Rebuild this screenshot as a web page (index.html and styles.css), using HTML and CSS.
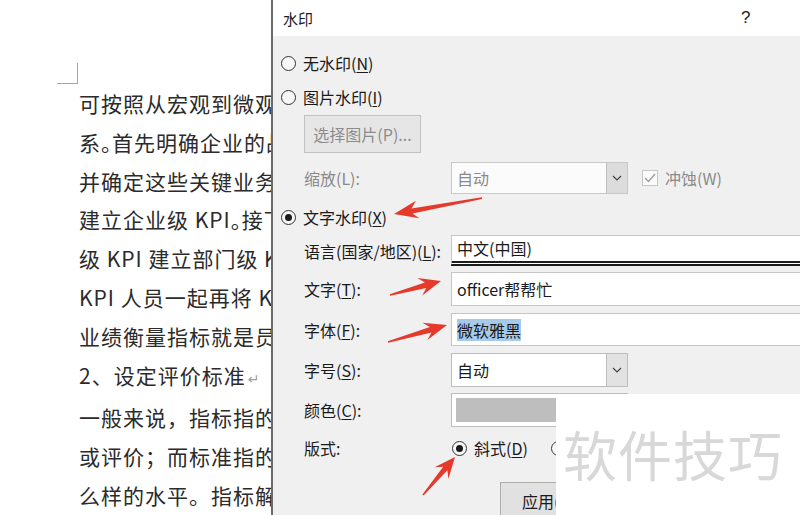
FILE: index.html
```html
<!DOCTYPE html>
<html lang="zh-CN">
<head>
<meta charset="utf-8">
<title>水印</title>
<link rel="stylesheet" href="styles.css">
</head>
<body>
<div class="page">
  <div class="doc">
    <div class="corner"></div>
    <div class="text">
      <div class="line">可按照从宏观到微观的顺序，逐层分解</div>
      <div class="line">系<span class="p">。</span>首先明确企业的战略目标</div>
      <div class="line">并确定这些关键业务领域的</div>
      <div class="line">建立企业级 KPI<span class="p">。</span>接下来</div>
      <div class="line">级 KPI 建立部门级 KPI</div>
      <div class="line">KPI 人员一起再将 KPI 进一步</div>
      <div class="line">业绩衡量指标就是员工考核</div>
      <div class="line">2、设定评价标准<span class="ret">↵</span></div>
      <div class="line">一般来说，指标指的是</div>
      <div class="line">或评价；而标准指的是</div>
      <div class="line">么样的水平。指标解决的</div>
    </div>
  </div>

  <div class="dialog">
    <div class="titlebar">
      <span class="title">水印</span>
      <span class="help">?</span>
      <span class="close">✕</span>
    </div>
    <div class="body">
      <div class="radio-row"><span class="radio"></span><span>无水印(<u>N</u>)</span></div>
      <div class="radio-row"><span class="radio"></span><span>图片水印(<u>I</u>)</span></div>
      <div class="indent"><div class="btn disabled">选择图片(P)...</div></div>

      <div class="form-row r-scale disabled">
        <span class="lbl">缩放(L):</span>
        <div class="combo">
          <span class="val">自动</span>
          <span class="drop"><svg width="10" height="6" viewBox="0 0 10 6"><polyline points="1,1 5,5 9,1" fill="none" stroke="#444" stroke-width="1.2"/></svg></span>
        </div>
        <span class="check"><svg width="12" height="10" viewBox="0 0 12 10"><polyline points="1,5 4.5,8.5 11,1" fill="none" stroke="#9a9a9a" stroke-width="1.2"/></svg></span>
        <span class="check-lbl">冲蚀(W)</span>
      </div>

      <div class="radio-row r-text"><span class="radio on"></span><span>文字水印(<u>X</u>)</span></div>

      <div class="form-row r-lang">
        <span class="lbl">语言(国家/地区)(<u>L</u>):</span>
        <div class="field lang">中文(中国)</div>
      </div>
      <div class="form-row r-word">
        <span class="lbl">文字(<u>T</u>):</span>
        <div class="field">officer帮帮忙</div>
      </div>
      <div class="form-row r-font">
        <span class="lbl">字体(<u>F</u>):</span>
        <div class="field"><span class="sel">微软雅黑</span></div>
      </div>
      <div class="form-row r-size">
        <span class="lbl">字号(<u>S</u>):</span>
        <div class="combo">
          <span class="val">自动</span>
          <span class="drop"><svg width="10" height="6" viewBox="0 0 10 6"><polyline points="1,1 5,5 9,1" fill="none" stroke="#444" stroke-width="1.2"/></svg></span>
        </div>
      </div>
      <div class="form-row r-color">
        <span class="lbl">颜色(<u>C</u>):</span>
        <div class="combo color"><span class="swatch"></span></div>
      </div>
      <div class="form-row r-layout">
        <span class="lbl">版式:</span>
        <div class="opts">
          <span class="radio on"></span><span>斜式(<u>D</u>)</span>
          <span class="radio second"></span><span>水平(<u>H</u>)</span>
        </div>
      </div>
      <div class="apply-row"><div class="btn apply">应用(A)</div></div>
    </div>
  </div>

  <div class="logo">软件技巧</div>

  <svg class="arrows" width="800" height="515" viewBox="0 0 800 515">
    <polygon points="394,214 415.9,200.7 411.5,208.5 481.9,197.3 482.1,198.9 412.5,213.5 419.3,218.3" fill="#e5392c"/>
    <polygon points="441,281 417.4,278.1 424.9,282.5 389.8,294.3 390.2,295.7 426.3,287.9 422.2,295.5" fill="#e5392c"/>
    <polygon points="447,325 422.4,322.8 429.9,327 387.8,341.3 388.2,342.7 431.5,332.4 427.4,340" fill="#e5392c"/>
    <polygon points="455,457 434.6,467.3 443.2,466.7 422.4,494.5 423.6,495.5 447.4,470.3 448.4,478.9" fill="#e5392c"/>
  </svg>
</div>
</body>
</html>
```

FILE: styles.css
```css
* {
  box-sizing: border-box;
  margin: 0;
  padding: 0;
}

html, body {
  width: 800px;
  height: 515px;
  overflow: hidden;
  background: #fff;
}

body {
  font-family: "Noto Sans CJK SC", "Noto Sans", sans-serif;
}

.page {
  position: relative;
  display: flex;
  width: 800px;
  height: 515px;
  overflow: hidden;
}

/* ---------- document ---------- */
.doc {
  width: 271px;
  flex: none;
  background: #fff;
  overflow: hidden;
}

.corner {
  width: 21px;
  height: 21px;
  margin: 63px 0 0 57px;
  border-right: 1px solid #a6a6a6;
  border-bottom: 1px solid #a6a6a6;
}

.text {
  padding-left: 79px;
  font-size: 21px;
  line-height: 38.8px;
  letter-spacing: 1px;
  color: #2b2b2b;
  white-space: nowrap;
}

.text .p {
  letter-spacing: -10px;
}

.text .ret {
  font-family: "DejaVu Sans", sans-serif;
  font-size: 14px;
  color: #9a9a9a;
  margin-left: 2px;
}

/* ---------- dialog ---------- */
.dialog {
  flex: 1;
  min-width: 0;
  border-left: 2px solid #6a6a6a;
  background: #f0f0f0;
  display: flex;
  flex-direction: column;
  overflow: hidden;
  color: #1a1a1a;
}

.titlebar {
  height: 36px;
  flex: none;
  background: #fff;
  display: flex;
  align-items: center;
  padding-left: 10px;
  font-size: 15px;
}

.help {
  margin-left: auto;
  font-family: "Liberation Sans", sans-serif;
  font-size: 17px;
}

.close {
  margin-left: 52px;
  margin-right: -15px;
  font-family: "DejaVu Sans", sans-serif;
  font-size: 15px;
}

.body {
  padding: 10px 0 0 8px;
  font-size: 16px;
  display: flex;
  flex-direction: column;
}

u {
  text-decoration-thickness: 1px;
  text-underline-offset: 2px;
}

.radio-row {
  height: 34px;
  display: flex;
  align-items: center;
  gap: 7px;
  white-space: nowrap;
}

.radio {
  width: 15px;
  height: 15px;
  flex: none;
  border: 1.5px solid #333;
  border-radius: 50%;
  background: #f7f7f7;
  display: flex;
  align-items: center;
  justify-content: center;
}

.radio.on::after {
  content: "";
  width: 7px;
  height: 7px;
  border-radius: 50%;
  background: #1a1a1a;
}

.indent {
  margin: 1px 0 0 23px;
}

.btn {
  display: flex;
  align-items: center;
  justify-content: center;
  height: 38px;
  background: #e1e1e1;
  border: 1px solid #adadad;
  font-size: 16px;
  white-space: nowrap;
}

.btn.disabled {
  width: 117px;
  color: #8c8c8c;
  background: #e6e6e6;
  border-color: #c2c2c2;
}

.form-row {
  display: flex;
  align-items: center;
  margin-left: 23px;
  height: 34px;
  white-space: nowrap;
}

.lbl {
  width: 147px;
  flex: none;
}

.disabled .lbl,
.disabled .val,
.check-lbl {
  color: #8a8a8a;
}

.r-scale { margin-top: 9px; height: 32px; }
.r-text  { margin-top: 6px; }
.r-lang  { margin-top: 1px; height: 31px; }
.r-word  { margin-top: 6px; }
.r-font  { margin-top: 7px; height: 33px; }
.r-size  { margin-top: 7px; }
.r-color { margin-top: 6px; }
.r-layout { margin-top: 4px; }

.combo {
  width: 177px;
  height: 100%;
  flex: none;
  display: flex;
  background: #fff;
  border: 1px solid #bdbdbd;
}

.disabled .combo {
  background: #fbfbfb;
  border-color: #c8c8c8;
}

.combo .val {
  flex: 1;
  display: flex;
  align-items: center;
  padding-left: 5px;
}

.combo .drop {
  width: 21px;
  flex: none;
  display: flex;
  align-items: center;
  justify-content: center;
  background: #e2e2e2;
  border-left: 1px solid #bdbdbd;
}

.disabled .combo .drop {
  background: #dcdcdc;
}

.combo.color {
  padding: 4px;
}

.swatch {
  flex: 1;
  background: #bebebe;
}

.check {
  width: 16px;
  height: 16px;
  flex: none;
  margin-left: 14px;
  border: 1px solid #c6c6c6;
  background: #fbfbfb;
  display: flex;
  align-items: center;
  justify-content: center;
}

.check-lbl {
  margin-left: 7px;
}

.field {
  width: 380px;
  height: 100%;
  flex: none;
  display: flex;
  align-items: center;
  padding-left: 5px;
  background: #fff;
  border: 1px solid #c6c6c6;
}

.field.lang {
  border-bottom: 5px double #1c1c1c;
  padding-bottom: 1px;
}

.sel {
  background: #a5caea;
  line-height: 22px;
}

.opts {
  display: flex;
  align-items: center;
  gap: 7px;
  padding-left: 1px;
}

.opts .second {
  margin-left: 16px;
}

.apply-row {
  margin: 17px 0 0 219px;
}

.btn.apply {
  width: 110px;
  justify-content: flex-start;
  padding-left: 21px;
}

/* ---------- overlays ---------- */
.logo {
  position: absolute;
  left: 556px;
  top: 394px;
  right: 0;
  bottom: 0;
  background: #fff;
  padding: 33px 0 0 7px;
  font-family: "Noto Sans CJK SC", sans-serif;
  font-size: 54px;
  line-height: 54px;
  letter-spacing: 1px;
  color: #d8d8d8;
  white-space: nowrap;
}

.arrows {
  position: absolute;
  left: 0;
  top: 0;
  pointer-events: none;
}
```
